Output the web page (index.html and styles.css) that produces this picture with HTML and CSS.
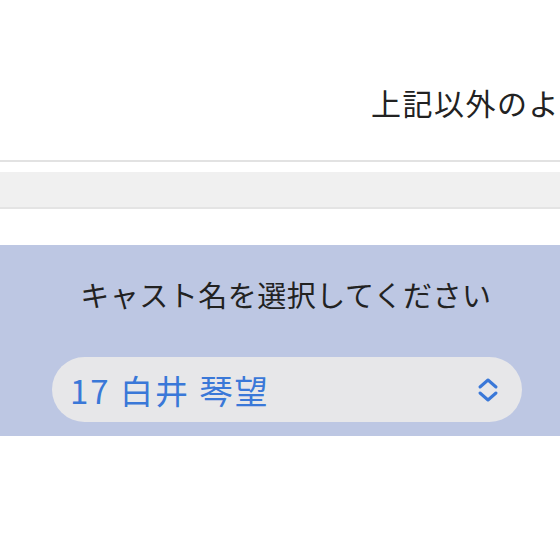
FILE: index.html
```html
<!DOCTYPE html>
<html lang="ja">
<head>
<meta charset="utf-8">
<link rel="stylesheet" href="styles.css">
</head>
<body>
<div class="top">
  <p class="intro">上記以外のような場合はお問い合わせください</p>
</div>
<div class="divider"></div>
<div class="band"></div>
<div class="gap"></div>
<section class="panel">
  <p class="label">キャスト名を選択してください</p>
  <div class="select">
    <span class="value">17 白井 琴望</span>
    <svg class="chev" width="24" height="26" viewBox="0 0 24 26" fill="none" stroke="#3a78d8" stroke-width="3" stroke-linecap="round" stroke-linejoin="round">
      <path d="M4 10 L12 3 L20 10"/>
      <path d="M4 16 L12 23 L20 16"/>
    </svg>
  </div>
</section>
</body>
</html>
```
FILE: styles.css
```css
html, body {
  margin: 0;
  padding: 0;
  background: #ffffff;
  width: 560px;
  overflow: hidden;
  font-family: "Noto Sans CJK JP", "Noto Sans", sans-serif;
}
.top {
  height: 160px;
  overflow: hidden;
}
.intro {
  margin: 0;
  padding: 80px 0 0 371px;
  white-space: nowrap;
  font-size: 30px;
  letter-spacing: 1.5px;
  line-height: 44px;
  color: #222222;
}
.divider {
  height: 2px;
  background: #e2e2e2;
}
.band {
  margin-top: 10px;
  height: 35px;
  background: #f0f0f0;
  border-bottom: 2px solid #e4e4e4;
}
.gap {
  height: 36px;
}
.panel {
  background: #bdc7e3;
  height: 191px;
  box-sizing: border-box;
  padding-top: 29px;
}
.label {
  margin: 0;
  padding-left: 12px;
  text-align: center;
  font-size: 29px;
  line-height: 40px;
  color: #222222;
  letter-spacing: 0.5px;
}
.select {
  margin: 43px 38px 0 52px;
  height: 65px;
  border-radius: 33px;
  background: #e7e7e9;
  display: flex;
  align-items: center;
  justify-content: space-between;
  padding: 0 22px 0 18px;
}
.value {
  font-size: 33px;
  letter-spacing: 2px;
  color: #3a78d8;
  line-height: 40px;
}
.chev {
  display: block;
}
```
